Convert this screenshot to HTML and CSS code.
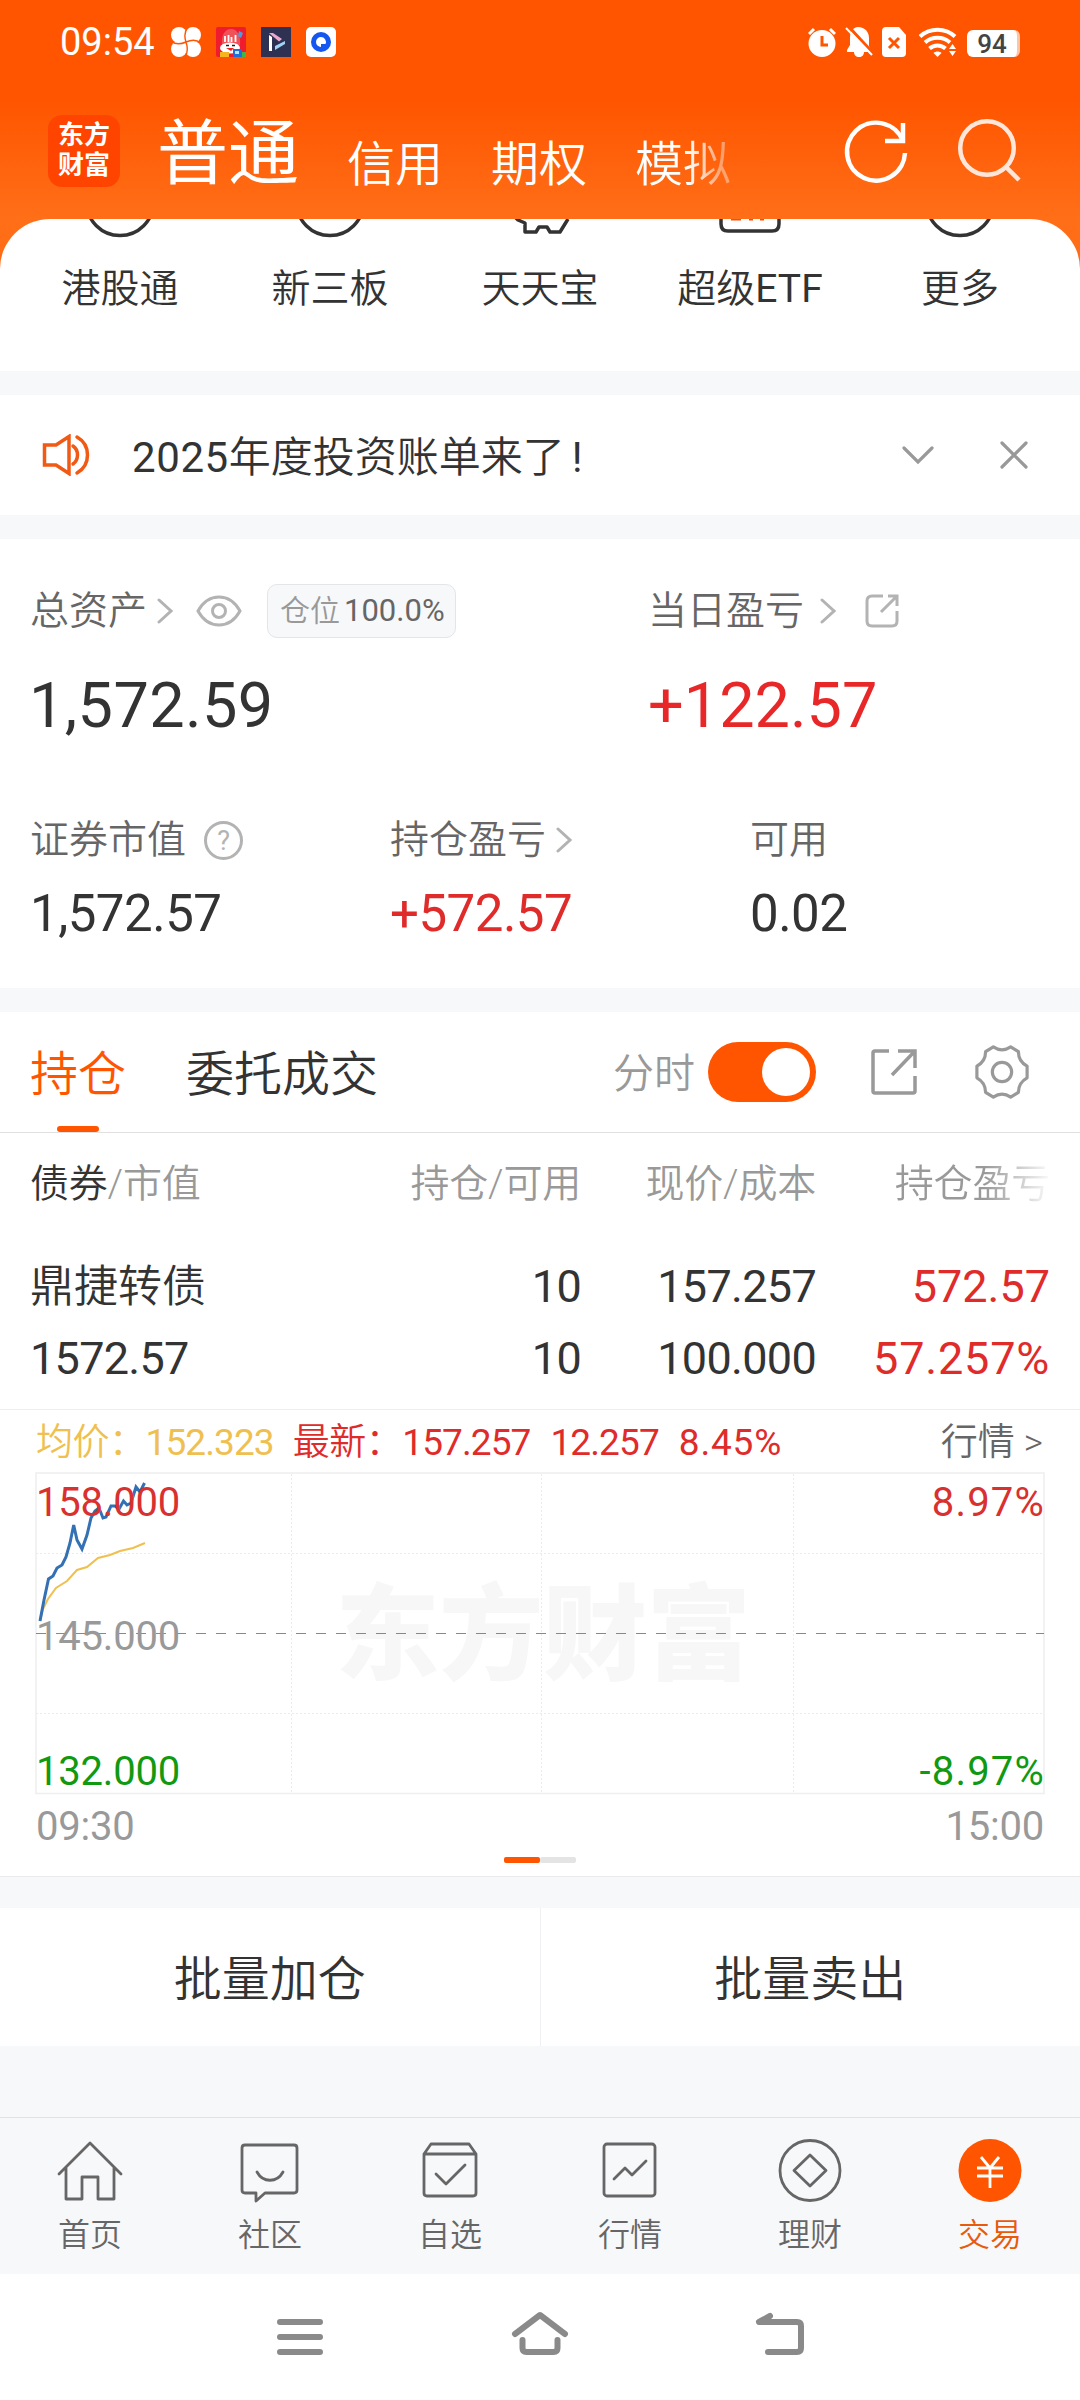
FILE: index.html
```html
<!DOCTYPE html>
<html lang="zh-CN">
<head>
    <meta charset="UTF-8">
    <meta name="viewport" content="width=device-width, initial-scale=1.0">
    <title>东方财富 - 交易</title>
    <link rel="stylesheet" href="styles.css">
</head>
<body>
    <header class="header">
        <div class="status-bar">
            <span class="time">09:54</span>
            <div class="status-apps">
                <svg width="30" height="30" viewBox="0 0 30 30">
                    <g fill="#fff">
                        <circle cx="8" cy="8" r="8"/>
                        <circle cx="22" cy="8" r="8"/>
                        <circle cx="8" cy="22" r="8"/>
                        <circle cx="22" cy="22" r="8"/>
                        <rect x="6" y="6" width="18" height="18"/>
                    </g>
                    <path d="M17 0q-5 6-2 15t-1 15M0 14q6 5 15 1t15 1" fill="none" stroke="#ff5500" stroke-width="1.400"/>
                </svg>
                <svg width="30" height="30" viewBox="0 0 30 30">
                    <rect width="30" height="30" rx="2" fill="#ee1c2e"/>
                    <path d="M6 18C5 8 9 2 15 2s10 6 9 16z" fill="#f0525a"/>
                    <path d="M9 9v6M12.500 8v7M15.500 10v5M19.500 8v7" stroke="#fff" stroke-width="1.800" fill="none"/>
                    <path d="M23 4l4 2-2 5-3-2z" fill="#4d9be0"/>
                    <ellipse cx="14" cy="21" rx="10" ry="5.500" fill="#fff"/>
                    <path d="M10 18.500h3M16 18.500h3" stroke="#222" stroke-width="1.500"/>
                    <path d="M10 21h8l-3 3z" fill="#e22"/>
                    <path d="M4 25h9v5H4z" fill="#f6b51e"/>
                    <path d="M17 22h9v8h-9z" fill="#1f6fd8"/>
                    <path d="M26 25h4v5h-4z" fill="#42b549"/>
                    <path d="M19 24h4v3h-4z" fill="#bfe2ff"/>
                </svg>
                <svg width="30" height="30" viewBox="0 0 30 30">
                    <rect width="30" height="30" fill="#2f3152"/>
                    <path d="M8 8l3 2v14H8z" fill="#fff"/>
                    <path d="M8 6l4 0 9 6-3 2.500z" fill="#e9a9cf"/>
                    <path d="M24 14l0 3-10 6v-4z" fill="#9fd4f5"/>
                </svg>
                <svg width="30" height="30" viewBox="0 0 30 30">
                    <rect width="30" height="30" rx="5" fill="#fff"/>
                    <circle cx="15" cy="15" r="10" fill="#1456f0"/>
                    <path d="M15 10a5 5 0 1 0 0 10v-3h4.500A5 5 0 0 0 15 10z" fill="#fff"/>
                </svg>
            </div>
            <div class="status-right">
                <svg width="28" height="30" viewBox="0 0 28 30">
                    <circle cx="14" cy="16.500" r="13.500" fill="#fff"/>
                    <path d="M1 7l5-5M27 7l-5-5" stroke="#fff" stroke-width="3"/>
                    <path d="M14 9v9h6" stroke="#ff5500" stroke-width="3" fill="none"/>
                </svg>
                <svg width="28" height="30" viewBox="0 0 28 30">
                    <path d="M13 0c7 0 11 5 11 11v8l2 6H2v-2l3-5v-7C5 5 8 0 13 0z" fill="#fff"/>
                    <path d="M9 25h10c0 3-2 5-5 5s-5-2-5-5z" fill="#fff"/>
                    <path d="M4 0l25 27" stroke="#ff5500" stroke-width="3"/>
                    <path d="M1 1l26 27" stroke="#fff" stroke-width="2"/>
                </svg>
                <svg width="24" height="30" viewBox="0 0 24 30">
                    <path d="M4 0h13l7 8v18a4 4 0 0 1-4 4H4a4 4 0 0 1-4-4V4a4 4 0 0 1 4-4z" fill="#fff"/>
                    <path d="M7 11l10 10M17 11L7 21" stroke="#ff5500" stroke-width="3"/>
                </svg>
                <svg class="wifi" width="38" height="30" viewBox="0 0 38 30">
                    <g fill="none" stroke="#fff" stroke-width="4">
                        <path d="M1 9.500a26 26 0 0 1 35 0"/>
                        <path d="M6 15.500a19 19 0 0 1 25 0"/>
                        <path d="M10.500 21.500a12 12 0 0 1 16 0"/>
                    </g>
                    <path d="M14.500 26c2-2 6-2 8 0l-4 4z" fill="#fff"/>
                    <path d="M30 22l3.500-5 3.500 5zM30 24l3.500 5 3.500-5z" fill="#fff"/>
                </svg>
                <div class="battery">94</div>
            </div>
        </div>
        <div class="title-bar">
            <div class="logo">东方<br>财富</div>
            <nav class="account-tabs">
                <span class="current">普通</span>
                <span>信用</span>
                <span>期权</span>
                <span class="fade">模拟</span>
            </nav>
            <svg class="refresh" width="64" height="68" viewBox="0 0 64 68" fill="none" stroke="#fff" stroke-width="4.500">
                <path d="M57 35A29 29 0 1 1 55 23"/>
                <path d="M55 5v18H37"/>
            </svg>
            <svg class="search" width="64" height="68" viewBox="0 0 64 68" fill="none" stroke="#ffe6d9" stroke-width="4.500">
                <circle cx="27" cy="33" r="26.800"/>
                <path d="M46 52l13 13"/>
            </svg>
        </div>
    </header>

    <main>
        <section class="shortcuts">
            <div class="shortcut">
                <svg width="90" height="20" viewBox="0 0 90 20" fill="none" stroke="#333" stroke-width="3.500"><circle cx="45" cy="-17" r="33.500"/></svg>
                <span>港股通</span>
            </div>
            <div class="shortcut">
                <svg width="90" height="20" viewBox="0 0 90 20" fill="none" stroke="#333" stroke-width="3.500"><circle cx="45" cy="-17" r="33.500"/></svg>
                <span>新三板</span>
            </div>
            <div class="shortcut">
                <svg width="90" height="20" viewBox="0 0 90 20" fill="none" stroke="#333" stroke-width="3.500" stroke-linejoin="round"><path d="M18 -4l5 5 7 3v9h11l3-5h8l3 5h10l8-13"/></svg>
                <span>天天宝</span>
            </div>
            <div class="shortcut">
                <svg width="90" height="20" viewBox="0 0 90 20" fill="none" stroke="#333" stroke-width="3.500">
                    <path d="M16 -6V5q0 7 7 7h44q7 0 7-7V-6"/>
                    <path d="M26 0h10M44 0h4M55 0h4" stroke="#f04e12" stroke-width="3"/>
                </svg>
                <span>超级<b>ETF</b></span>
            </div>
            <div class="shortcut">
                <svg width="90" height="20" viewBox="0 0 90 20" fill="none" stroke="#333" stroke-width="3.500"><circle cx="45" cy="-17" r="33.500"/></svg>
                <span>更多</span>
            </div>
        </section>

        <section class="notice">
            <svg width="48" height="42" viewBox="0 0 48 42" fill="none" stroke="#f05a14" stroke-width="3.500" stroke-linecap="round">
                <path d="M2.500 11H14L27 2.500v37L14 31H2.500z"/>
                <path d="M31 12c6 4 6 14 0 18M35 3c14 8 14 28 0 36"/>
            </svg>
            <p><span class="year">2025</span>年度投资账单来了<span class="mark">!</span></p>
            <svg class="expand" width="32" height="20" viewBox="0 0 32 20" fill="none" stroke="#999" stroke-width="3.200" stroke-linecap="round"><path d="M2 3l14 14L30 3"/></svg>
            <svg width="28" height="28" viewBox="0 0 28 28" fill="none" stroke="#999" stroke-width="3.200" stroke-linecap="round"><path d="M2 2l24 24M26 2L2 26"/></svg>
        </section>

        <section class="assets">
            <div class="assets-top">
                <div>
                    <div class="label">
                        总资产
                        <svg class="arrow" width="16" height="26" viewBox="0 0 16 26"><path d="M2 2l12 11L2 24"/></svg>
                        <svg class="eye" width="46" height="32" viewBox="0 0 46 32" fill="none" stroke="#b3b3b3" stroke-width="3">
                            <path d="M2 16C7 7 14 2 23 2s16 5 21 14c-5 9-12 14-21 14S7 25 2 16z"/>
                            <circle cx="23" cy="16" r="6.500"/>
                        </svg>
                        <span class="badge">仓位<b>100.0%</b></span>
                    </div>
                    <div class="total">1,572.59</div>
                </div>
                <div>
                    <div class="label">
                        当日盈亏
                        <svg class="arrow day" width="16" height="26" viewBox="0 0 16 26"><path d="M2 2l12 11L2 24"/></svg>
                        <svg class="share-small" width="34" height="34" viewBox="0 0 34 34" fill="none" stroke="#b3b3b3" stroke-width="3">
                            <path d="M18 2H7Q2 2 2 7v20q0 5 5 5h20q5 0 5-5V17"/>
                            <path d="M23 2h9v10M32 2L16 18"/>
                        </svg>
                    </div>
                    <div class="total up">+122.57</div>
                </div>
            </div>
            <div class="assets-bottom">
                <div>
                    <div class="label">
                        证券市值
                        <span class="help">?</span>
                    </div>
                    <div class="value">1,572.57</div>
                </div>
                <div>
                    <div class="label">
                        持仓盈亏
                        <svg class="arrow" width="16" height="26" viewBox="0 0 16 26"><path d="M2 2l12 11L2 24"/></svg>
                    </div>
                    <div class="value up">+572.57</div>
                </div>
                <div>
                    <div class="label">可用</div>
                    <div class="value">0.02</div>
                </div>
            </div>
        </section>

        <section class="position">
            <div class="position-tabs">
                <span class="tab active">持仓</span>
                <span class="tab">委托成交</span>
                <span class="switch-label">分时</span>
                <span class="switch"></span>
                <svg class="share" width="48" height="48" viewBox="0 0 48 48" fill="none" stroke="#999" stroke-width="3.500">
                    <path d="M19 3H5Q3 3 3 5v38q0 2 2 2h38q2 0 2-2V28"/>
                    <path d="M28 3h17v17M45 3L22 27"/>
                </svg>
                <svg class="gear" width="56" height="56" viewBox="0 0 58 58" fill="none" stroke="#999" stroke-width="3.300" stroke-linejoin="round">
                    <path d="M20 3q9 6 18 0l8 5q0 10 9 15v12q-9 5-9 15l-8 5q-9-6-18 0l-8-5q0-10-9-15V23q9-5 9-15z"/>
                    <circle cx="29" cy="29" r="10"/>
                </svg>
            </div>

            <div class="holdings">
                <div class="row head"><span><i>债券</i>/市值</span><span>持仓/可用</span><span>现价/成本</span><span class="fade">持仓盈亏</span></div>
                <div class="row"><span class="name">鼎捷转债</span><span>10</span><span>157.257</span><span class="up">572.57</span></div>
                <div class="row"><span>1572.57</span><span>10</span><span>100.000</span><span class="up rate">57.257%</span></div>
            </div>

            <div class="quote">
                <span class="avg">均价：<b>152.323</b></span>
                <span class="up latest">最新：<b>157.257</b></span>
                <b class="up change">12.257</b>
                <b class="up percent">8.45%</b>
                <span class="more">行情 &gt;</span>
            </div>

            <svg class="chart" width="1080" height="384" viewBox="0 0 1080 384">
                <text class="watermark" x="543" y="200" text-anchor="middle">东方财富</text>
                <g fill="none" stroke="#ebebeb" stroke-width="1" stroke-dasharray="2 2">
                    <path d="M291.500 2v320M541.500 2v320M793.500 2v320M36 81.500h1008M36 241.500h1008"/>
                </g>
                <rect x="36" y="1" width="1008" height="320.500" fill="none" stroke="#eee" stroke-width="1.500"/>
                <path d="M36 161.500h1008" stroke="#888" stroke-width="1" stroke-dasharray="10 10"/>
                <polyline points="40,149 43,137 48,127 56,116 67,109 77,98 87,95 98,86 110,83 120,79 133,76 145,71" fill="none" stroke="#efc050" stroke-width="2"/>
                <polyline points="40,149 44,128 48.500,107 53,104 57,96 62,93 66,85 70,71 73.700,53 77,68 82,77 87,63 91,46 95,39 99,36 103,46 106,45 111,34 115,34 119,37 123.500,29 127,33 131,31 136,15 140,20 144.500,11" fill="none" stroke="#3370b4" stroke-width="3"/>
                <text class="red" x="36" y="43.500">158.000</text>
                <text class="red rate" x="1045" y="43.500" text-anchor="end">8.97%</text>
                <text class="gray" x="36" y="177.500">145.000</text>
                <text class="green" x="36" y="312.500">132.000</text>
                <text class="green rate" x="1045" y="312.500" text-anchor="end">-8.97%</text>
                <text class="gray" x="36" y="368">09:30</text>
                <text class="gray" x="1044" y="368" text-anchor="end">15:00</text>
            </svg>
            <div class="pager"><span class="on"></span><span></span></div>
        </section>

        <section class="batch">
            <button>批量加仓</button>
            <button>批量卖出</button>
        </section>
    </main>

    <nav class="tab-bar">
        <a>
            <svg width="66" height="66" viewBox="0 0 66 66">
                <path d="M2 35L33 4l31 31M9 29v31h16V38h16v22h16V29"/>
            </svg>
            首页
        </a>
        <a>
            <svg width="66" height="66" viewBox="0 0 66 66">
                <path d="M8 6h49q3 0 3 3v42q0 3-3 3H28l-9 8v-8H8q-3 0-3-3V9q0-3 3-3z"/>
                <path d="M20 33c6 11 20 11 26 0"/>
            </svg>
            社区
        </a>
        <a>
            <svg width="66" height="66" viewBox="0 0 66 66">
                <path d="M7 15l7-10h38l7 10v39q0 3-3 3H10q-3 0-3-3zM7 15h52M19 35l10 10 19-19"/>
            </svg>
            自选
        </a>
        <a>
            <svg width="66" height="66" viewBox="0 0 66 66">
                <rect x="7" y="5" width="51" height="52" rx="3"/>
                <path d="M17 40l11-11 7 7 14-14"/>
            </svg>
            行情
        </a>
        <a>
            <svg width="66" height="66" viewBox="0 0 66 66">
                <circle cx="33" cy="31.500" r="30"/>
                <path d="M33 16l16 15.500L33 47 17 31.500z"/>
            </svg>
            理财
        </a>
        <a class="active">
            <svg width="66" height="66" viewBox="0 0 66 66">
                <circle cx="33" cy="31.500" r="31.500"/>
                <path d="M24 18l9 11 9-11M20 29h26M20 37h26M33 29v20"/>
            </svg>
            交易
        </a>
    </nav>

    <footer class="system-nav">
        <svg width="60" height="50" viewBox="0 0 60 50"><path d="M10 12h40M10 27h40M10 42h40"/></svg>
        <svg width="60" height="50" viewBox="0 0 60 50"><path d="M5 24L30 5l25 19M12.500 30v8q0 4 4 4h27q4 0 4-4v-8"/></svg>
        <svg width="60" height="50" viewBox="0 0 60 50"><path d="M20 6L9 12h38q4 0 4 4v22q0 4-4 4H18"/></svg>
    </footer>
</body>
</html>
```

FILE: styles.css
```css
* {
    box-sizing: border-box;
}

body {
    margin: 0;
    width: 1080px;
    height: 2400px;
    overflow: hidden;
    background-color: #f7f8fa;
    font-family: Roboto, "Noto Sans CJK SC", sans-serif;
    font-weight: 350;
    color: #333;
}

svg {
    display: block;
    flex-shrink: 0;
}

b {
    font-weight: 400;
}

.up {
    color: #e02b2b;
}

/* Header */
.header {
    height: 275px;
    background: linear-gradient(#ff5500 0, #ff5500 100px, #ff6f18 219px, #ff6a14 275px);
    color: #fff;
}

.status-bar {
    display: flex;
    align-items: center;
    height: 84px;
    padding: 0 60px;
}

.time {
    width: 111px;
    font-size: 38px;
    font-weight: 400;
}

.status-apps {
    display: flex;
    gap: 15px;
}

.status-right {
    display: flex;
    align-items: center;
    gap: 9px;
    margin-left: auto;
}

.wifi {
    margin-left: 4px;
}

.battery {
    width: 53px;
    height: 27px;
    margin: 2px 0 0 1px;
    border-right: 3px solid #ffc4a3;
    border-radius: 6px;
    background-color: #fff;
    color: #444;
    font-size: 26px;
    font-weight: 500;
    line-height: 28px;
    text-align: center;
}

.title-bar {
    display: flex;
    height: 135px;
    padding: 31px 56px 0 48px;
}

.logo {
    width: 72px;
    height: 72px;
    padding-top: 5px;
    border-radius: 14px;
    background-color: #ff4400;
    font-size: 26px;
    font-weight: 700;
    line-height: 30px;
    text-align: center;
}

.account-tabs {
    display: flex;
    gap: 48px;
    margin-left: 37px;
    font-size: 48px;
    line-height: 100px;
}

.account-tabs .current {
    font-size: 71px;
    font-weight: 400;
    line-height: 78px;
}

.account-tabs .fade {
    background: linear-gradient(90deg, #fff 55%, rgba(255, 255, 255, 0.4) 90%);
    -webkit-background-clip: text;
    background-clip: text;
    color: transparent;
}

.refresh {
    margin: 3px 0 0 auto;
    overflow: visible;
}

.search {
    margin-left: 48px;
    overflow: visible;
}

/* Shortcuts */
.shortcuts {
    position: relative;
    display: grid;
    grid-template-columns: repeat(5, 210px);
    justify-content: center;
    height: 152px;
    margin-top: -56px;
    border-radius: 50px 50px 0 0;
    background-color: #fff;
    overflow: hidden;
}

.shortcut {
    display: flex;
    flex-direction: column;
    align-items: center;
    gap: 30px;
    font-size: 39px;
    line-height: 40px;
}

/* Notice */
.notice {
    display: flex;
    align-items: center;
    height: 120px;
    margin-top: 24px;
    padding: 0 52px 0 42px;
    background-color: #fff;
}

.notice p {
    margin: 5px 0 0 42px;
    font-size: 42px;
    line-height: 50px;
}

.year {
    font-weight: 400;
    letter-spacing: 0.6px;
}

.mark {
    margin-left: 7px;
    font-weight: 400;
}

.expand {
    margin: 0 66px 0 auto;
}

/* Assets */
.assets {
    height: 449px;
    margin-top: 24px;
    padding: 45px 30px 0;
    background-color: #fff;
}

.assets-top {
    display: grid;
    grid-template-columns: 618px 1fr;
}

.assets-bottom {
    display: grid;
    grid-template-columns: 360px 360px 1fr;
    margin-top: 71px;
}

.label {
    display: flex;
    align-items: center;
    height: 54px;
    color: #666;
    font-size: 39px;
    line-height: 50px;
}

.arrow {
    margin-left: 10px;
    fill: none;
    stroke: #b3b3b3;
    stroke-width: 3;
    stroke-linecap: round;
}

.arrow.day {
    margin-left: 16px;
}

.eye {
    margin-left: 23px;
}

.share-small {
    margin-left: 29px;
}

.badge {
    display: flex;
    align-items: center;
    gap: 4px;
    width: 189px;
    height: 54px;
    margin-left: 25px;
    padding-left: 12px;
    border: 1px solid #e4e5e8;
    border-radius: 10px;
    background-color: #f7f8fa;
    color: #999;
    font-size: 30px;
}

.badge b {
    color: #666;
    font-size: 31px;
}

.total {
    margin-top: 30px;
    font-size: 63px;
    font-weight: 400;
    line-height: 76px;
}

.assets-top > div:first-child .total {
    margin-left: -1px;
    letter-spacing: 0.4px;
}

.total.up {
    color: #e82828;
}

.assets-bottom .label {
    height: 50px;
}

.help {
    width: 39px;
    height: 39px;
    margin-left: 18px;
    border: 3px solid #b3b3b3;
    border-radius: 50%;
    color: #b3b3b3;
    font-size: 27px;
    font-weight: 400;
    line-height: 34px;
    text-align: center;
}

.value {
    margin-top: 18px;
    font-size: 51px;
    font-weight: 400;
    letter-spacing: -0.5px;
    line-height: 61px;
}

/* Holdings */
.position {
    height: 865px;
    margin-top: 24px;
    border-bottom: 1px solid #ebebed;
    background-color: #fff;
}

.position-tabs {
    display: flex;
    align-items: center;
    height: 121px;
    padding: 0 50px 0 30px;
    border-bottom: 1px solid #e0e0e0;
}

.tab {
    height: 120px;
    margin-right: 60px;
    font-size: 48px;
    line-height: 126px;
}

.tab.active {
    color: #ff5500;
}

.tab.active::after {
    content: "";
    display: block;
    width: 42px;
    height: 6px;
    margin: -12px auto 0;
    border-radius: 3px;
    background-color: #ff5500;
}

.switch-label {
    margin-left: auto;
    padding-top: 4px;
    color: #999;
    font-size: 41px;
    line-height: 50px;
}

.switch {
    width: 108px;
    height: 60px;
    margin-left: 13px;
    padding: 6px;
    border-radius: 30px;
    background-color: #ff5500;
}

.switch::after {
    content: "";
    display: block;
    width: 48px;
    height: 48px;
    margin-left: auto;
    border-radius: 50%;
    background-color: #fff;
}

.share {
    margin-left: 54px;
}

.gear {
    margin-left: 56px;
}

.holdings {
    height: 277px;
    border-bottom: 1px solid #eee;
}

.row {
    display: grid;
    grid-template-columns: 310px 241px 235px 234px;
    padding: 0 30px;
    font-size: 45px;
    font-weight: 400;
    letter-spacing: -0.7px;
    line-height: 72px;
}

.row .name {
    font-size: 44px;
    font-weight: 350;
    letter-spacing: 0;
}

.row span + span {
    text-align: right;
}

.row .up {
    letter-spacing: 0;
}

.row .rate {
    letter-spacing: 0.8px;
}

.row.head {
    height: 118px;
    color: #999;
    font-size: 39px;
    font-weight: 350;
    letter-spacing: -0.2px;
    line-height: 102px;
}

.row i {
    color: #333;
    font-style: normal;
}

.row .fade {
    background: linear-gradient(90deg, #999 72%, rgba(153, 153, 153, 0.05) 100%);
    -webkit-background-clip: text;
    background-clip: text;
    color: transparent;
}

.quote {
    display: flex;
    height: 62px;
    padding: 0 37px 0 36px;
    font-size: 37px;
    letter-spacing: -0.5px;
    line-height: 65px;
}

.quote b {
    letter-spacing: -0.9px;
}

.avg {
    color: #efc050;
}

.latest {
    margin-left: 19px;
}

.change,
.percent {
    margin-left: 20px;
}

.quote .percent {
    letter-spacing: 0.8px;
}

.more {
    margin-left: auto;
    color: #666;
    letter-spacing: 0;
}

.chart {
    font-size: 40px;
    font-weight: 400;
    letter-spacing: -0.2px;
}

.chart .red {
    fill: #d93030;
}

.chart .gray {
    fill: #999;
}

.chart .green {
    fill: #119911;
}

.chart .rate {
    letter-spacing: 1.2px;
}

.chart .watermark {
    fill: #f7f7f7;
    font-size: 104px;
    font-weight: 900;
}

.pager {
    display: flex;
    justify-content: center;
    margin-top: 1px;
}

.pager span {
    width: 36px;
    height: 6px;
    border-radius: 2px;
    background-color: #e4e4e4;
}

.pager .on {
    background-color: #ff5500;
}

/* Batch buttons */
.batch {
    display: flex;
    height: 138px;
    margin-top: 31px;
    background-color: #fff;
}

.batch button {
    flex: 1;
    padding: 0;
    border: none;
    background: none;
    color: #333;
    font-family: inherit;
    font-size: 48px;
    font-weight: 350;
    line-height: 144px;
}

.batch button:first-child {
    border-right: 1px solid #f0f0f2;
}

/* Bottom tabs */
.tab-bar {
    display: grid;
    grid-template-columns: repeat(6, 1fr);
    height: 157px;
    margin-top: 71px;
    padding-top: 21px;
    border-top: 1px solid #e1e2e4;
    background-color: #f7f8fa;
}

.tab-bar a {
    display: flex;
    flex-direction: column;
    align-items: center;
    gap: 10px;
    color: #666;
    font-size: 32px;
    line-height: 40px;
}

.tab-bar svg {
    fill: none;
    stroke: #666;
    stroke-width: 2.8;
    stroke-linecap: round;
    stroke-linejoin: round;
}

.tab-bar .active {
    color: #e85a0c;
}

.tab-bar .active circle {
    fill: #ff5500;
    stroke: none;
}

.tab-bar .active path {
    stroke: #fff;
    stroke-linecap: butt;
}

.system-nav {
    display: flex;
    justify-content: center;
    gap: 180px;
    height: 126px;
    padding-top: 36px;
    background-color: #fff;
}

.system-nav svg {
    fill: none;
    stroke: #8a8a8a;
    stroke-width: 6;
    stroke-linecap: round;
    stroke-linejoin: round;
}
```
